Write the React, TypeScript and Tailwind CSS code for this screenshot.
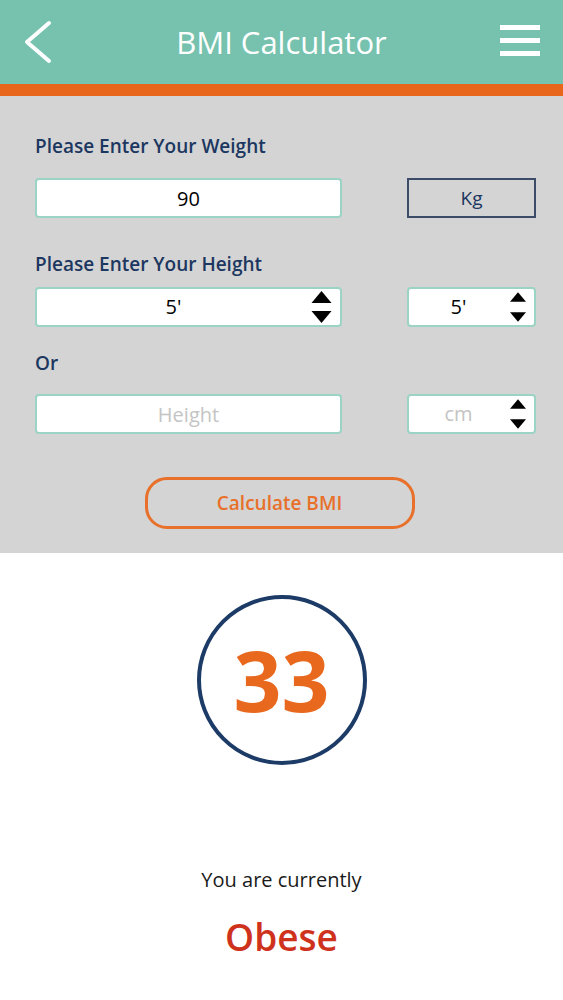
import { useState } from "react";

function Arrows({ size = "lg" }: { size?: "lg" | "sm" }) {
  const w = size === "lg" ? 21 : 16;
  return (
    <div className="flex flex-col items-center gap-[8px]">
      <svg width={w} height="12" viewBox="0 0 20 12" aria-hidden="true">
        <path d="M10 0 L20 12 L0 12 Z" fill="#000" />
      </svg>
      <svg width={w} height="12" viewBox="0 0 20 12" aria-hidden="true">
        <path d="M0 0 L20 0 L10 12 Z" fill="#000" />
      </svg>
    </div>
  );
}

export default function App() {
  const [weight, setWeight] = useState("90");
  const [cm, setCm] = useState("");

  return (
    <div
      className="min-h-screen w-[563px] bg-white"
      style={{ fontFamily: '"Open Sans", "Noto Sans", sans-serif' }}
    >
      {/* header */}
      <div className="relative flex h-[84px] items-center justify-center bg-[#76c2af]">
        <button className="absolute left-[22px] top-[20px]" aria-label="Back">
          <svg width="32" height="44" viewBox="0 0 32 44" aria-hidden="true">
            <path
              d="M27 3 L5 22 L27 41"
              fill="none"
              stroke="#fff"
              strokeWidth="4"
              strokeLinecap="round"
              strokeLinejoin="round"
            />
          </svg>
        </button>
        <h1 className="text-[31px] font-medium text-white">BMI Calculator</h1>
        <button
          className="absolute right-[23px] top-[25px] flex w-[40px] flex-col gap-[8px]"
          aria-label="Menu"
        >
          <span className="h-[5px] w-full bg-white" />
          <span className="h-[5px] w-full bg-white" />
          <span className="h-[5px] w-full bg-white" />
        </button>
      </div>
      <div className="h-[12px] bg-[#e8651c]" />

      {/* form */}
      <div className="bg-[#d4d4d4] pb-[24px] pl-[35px] pt-[38px]">
        <p className="text-[19px] font-semibold leading-[24px] text-[#1c3760]">
          Please Enter Your Weight
        </p>
        <div className="mt-[20px] grid grid-cols-[307px_129px] gap-x-[65px]">
          <input
            value={weight}
            onChange={(e) => setWeight(e.target.value)}
            className="h-[40px] rounded-[4px] border-2 border-[#9bd3c4] bg-white text-center text-[20px] text-black outline-none"
          />
          <div className="flex h-[40px] items-center justify-center border-2 border-[#3b4b68] text-[19px] font-medium text-[#1c3760]">
            Kg
          </div>
        </div>

        <p className="mt-[34px] text-[19px] font-semibold leading-[24px] text-[#1c3760]">
          Please Enter Your Height
        </p>
        <div className="mt-[11px] grid grid-cols-[307px_129px] gap-x-[65px]">
          <div className="relative flex h-[40px] items-center justify-center rounded-[4px] border-2 border-[#9bd3c4] bg-white pr-[30px]">
            <span className="text-[20px] text-black">5'</span>
            <div className="absolute right-[8px] top-[2px]">
              <Arrows />
            </div>
          </div>
          <div className="relative flex h-[40px] items-center justify-center rounded-[4px] border-2 border-[#9bd3c4] bg-white pr-[26px]">
            <span className="text-[20px] text-black">5'</span>
            <div className="absolute right-[8px] top-[2px]">
              <Arrows size="sm" />
            </div>
          </div>
        </div>

        <p className="mt-[24px] text-[19px] font-semibold leading-[24px] text-[#1c3760]">
          Or
        </p>
        <div className="mt-[19px] grid grid-cols-[307px_129px] gap-x-[65px]">
          <input
            value={cm}
            onChange={(e) => setCm(e.target.value)}
            placeholder="Height"
            className="h-[40px] rounded-[4px] border-2 border-[#9bd3c4] bg-white text-center text-[20px] text-black outline-none placeholder:text-[#c4c4c4]"
          />
          <div className="relative flex h-[40px] items-center justify-center rounded-[4px] border-2 border-[#9bd3c4] bg-white pr-[26px]">
            <span className="text-[20px] text-[#c4c4c4]">cm</span>
            <div className="absolute right-[8px] top-[2px]">
              <Arrows size="sm" />
            </div>
          </div>
        </div>

        <div className="mt-[43px] pr-[39px]">
          <button className="mx-auto flex h-[52px] w-[270px] items-center justify-center rounded-[22px] border-[3px] border-[#e8702a] text-[19px] font-semibold text-[#e8702a]">
            Calculate BMI
          </button>
        </div>
      </div>

      {/* result */}
      <div className="flex flex-col items-center pb-[40px]">
        <div className="mt-[42px] flex h-[170px] w-[170px] items-center justify-center rounded-full border-4 border-[#1c3b66]">
          <span className="text-[84px] font-bold leading-none text-[#e8681e]">
            33
          </span>
        </div>
        <p className="mt-[101px] text-[20px] leading-[28px] text-[#1a1a1a]">
          You are currently
        </p>
        <p className="mt-[20px] text-[37px] font-semibold leading-[46px] text-[#cf321c]">
          Obese
        </p>
      </div>
    </div>
  );
}
